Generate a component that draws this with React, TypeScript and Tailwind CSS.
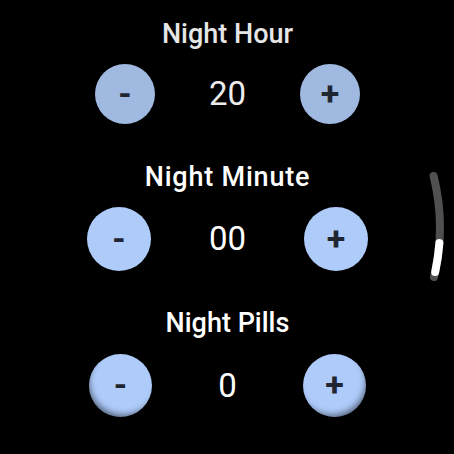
import React from "react";

const font = { fontFamily: "Roboto, 'Noto Sans', sans-serif" };

function Btn({ label, size, dim, shade }: { label: string; size: number; dim?: boolean; shade?: string }) {
  return (
    <div
      className={
        "rounded-full flex items-center justify-center text-[34px] font-bold text-[#1f2631] " +
        (dim ? "bg-[#a0b9e1] " : "bg-[#aecbfa] ") +
        (shade ?? "")
      }
      style={{ width: size, height: size }}
    >
      <span className="leading-none -mt-[3px]">{label}</span>
    </div>
  );
}

function Item({
  title,
  value,
  size,
  gap,
  titleClass,
  dim,
  shadeL,
  shadeR,
  titleMt,
  rowMt,
}: {
  title: string;
  value: string;
  size: number;
  gap: number;
  titleClass: string;
  dim?: boolean;
  shadeL?: string;
  shadeR?: string;
  titleMt: string;
  rowMt: string;
}) {
  return (
    <div className={"flex flex-col items-center " + titleMt}>
      <div className={"text-[27px] leading-[30px] font-medium " + titleClass}>{title}</div>
      <div className={"flex flex-row items-center " + rowMt}>
        <Btn label="-" size={size} dim={dim} shade={shadeL} />
        <div
          className={"flex items-center justify-center text-[33px] leading-[40px] " + (dim ? "text-[#ececec]" : "text-white")}
          style={{ width: gap }}
        >
          {value}
        </div>
        <Btn label="+" size={size} dim={dim} shade={shadeR} />
      </div>
    </div>
  );
}

export default function App() {
  return (
    <div className="relative w-[454px] h-[454px] bg-black overflow-hidden" style={font}>
      <div className="flex flex-col items-center pl-[1px]">
        <Item
          title="Night Hour"
          value="20"
          size={60}
          gap={145}
          titleClass="text-[#e6e6e6]"
          dim
          titleMt="mt-[19px]"
          rowMt="mt-[15px]"
        />
        <Item
          title="Night Minute"
          value="00"
          size={64}
          gap={153}
          titleClass="text-white tracking-[0.8px]"
          titleMt="mt-[38px]"
          rowMt="mt-[15px]"
        />
        <Item
          title="Night Pills"
          value="0"
          size={63}
          gap={151}
          titleClass="text-white"
          shadeL="shadow-[inset_3px_-5px_6px_-3px_rgba(0,0,0,0.5)]"
          shadeR="shadow-[inset_-3px_-5px_6px_-3px_rgba(0,0,0,0.5)]"
          titleMt="mt-[37px]"
          rowMt="mt-[16px]"
        />
      </div>
      <svg className="absolute left-0 top-0" width="454" height="454" viewBox="0 0 454 454">
        <path d="M433.6 176 A213 213 0 0 1 434 277" fill="none" stroke="#505050" strokeWidth="8" strokeLinecap="round" />
        <path d="M439.4 243 A213 213 0 0 1 435.2 272" fill="none" stroke="#ffffff" strokeWidth="8" strokeLinecap="round" />
      </svg>
    </div>
  );
}
